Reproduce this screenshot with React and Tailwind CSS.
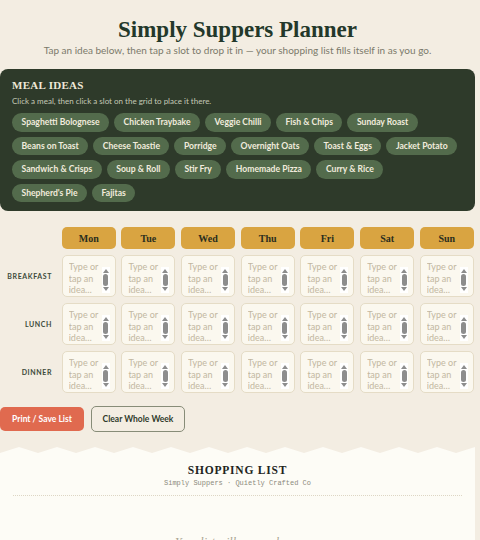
import React from 'react';

const meals = [
  'Spaghetti Bolognese', 'Chicken Traybake', 'Veggie Chilli', 'Fish & Chips', 'Sunday Roast',
  'Beans on Toast', 'Cheese Toastie', 'Porridge', 'Overnight Oats', 'Toast & Eggs', 'Jacket Potato',
  'Sandwich & Crisps', 'Soup & Roll', 'Stir Fry', 'Homemade Pizza', 'Curry & Rice',
  "Shepherd's Pie", 'Fajitas',
];
const days = ['Mon', 'Tue', 'Wed', 'Thu', 'Fri', 'Sat', 'Sun'];
const slots = ['Breakfast', 'Lunch', 'Dinner'];

const sans = { fontFamily: 'Lato, "Open Sans", sans-serif' };

const Zigzag = () => {
  const pts = [];
  for (let x = 0; x <= 475; x += 38) {
    pts.push(`${x},6`, `${x + 19},0`);
  }
  pts.push('475,6', '475,8', '0,8');
  return (
    <svg width="475" height="8" viewBox="0 0 475 8" className="block">
      <polygon points={pts.join(' ')} fill="#fdfcf6" />
    </svg>
  );
};

// the little classic scrollbar each slot shows
const Scrollbar = () => (
  <div className="mt-[6px] w-[8px] h-[26px] bg-white flex flex-col items-center justify-between py-[2px] shrink-0">
    <div className="w-0 h-0 border-x-[3px] border-x-transparent border-b-[4px] border-b-[#8d8d8d]" />
    <div className="w-[5px] h-[12px] rounded-full bg-[#8d8d8d]" />
    <div className="w-0 h-0 border-x-[3px] border-x-transparent border-t-[4px] border-t-[#8d8d8d]" />
  </div>
);

export default function App() {
  return (
    <div className="min-h-screen bg-[#f3ede2] overflow-hidden" style={sans}>
      <div className="w-[475px]">
        <header className="pt-[16px] text-center">
          <h1 className="font-['Liberation_Serif',serif] font-bold text-[23px] leading-[27px] text-[#23382a]">
            Simply Suppers Planner
          </h1>
          <p className="text-[10px] leading-[14px] text-[#7b7a6b]">
            Tap an idea below, then tap a slot to drop it in — your shopping list fills itself in as you go.
          </p>
        </header>

        <section className="mt-[12px] bg-[#2e3a2a] rounded-[8px] px-[12px] pt-[9px] pb-[9px]">
          <h2 className="font-['Liberation_Serif',serif] font-bold text-[11px] leading-[14px] text-[#efe8d8] tracking-[0.3px]">
            MEAL IDEAS
          </h2>
          <p className="text-[8px] leading-[12px] text-[#c4c9b6] mt-[3px]">
            Click a meal, then click a slot on the grid to place it there.
          </p>
          <div className="w-[449px] flex flex-wrap gap-x-[5px] gap-y-[5px] mt-[6px]">
            {meals.map((m) => (
              <button
                key={m}
                className="h-[18.5px] px-[9.5px] rounded-full bg-[#536b4c] text-[#f1ebdd] text-[8.6px] font-bold leading-[18px]"
              >
                {m}
              </button>
            ))}
          </div>
        </section>

        <div className="mt-[16px] grid grid-cols-[56px_repeat(7,54px)] gap-x-[5.7px] gap-y-[6px]">
          <div />
          {days.map((d) => (
            <div
              key={d}
              className="h-[22px] rounded-[5px] bg-[#d9a441] flex items-center justify-center font-['Liberation_Serif',serif] font-bold text-[10px] text-[#2b2e1e]"
            >
              {d}
            </div>
          ))}
          {slots.map((s) => (
            <React.Fragment key={s}>
              <div className="h-[42px] flex items-center justify-end pr-[4px] text-[7px] font-bold uppercase tracking-[0.6px] text-[#3c4a3a]">
                {s}
              </div>
              {days.map((d) => (
                <div
                  key={d}
                  className="h-[42px] rounded-[5px] border border-[#e5dcc6] bg-[#fbf8ef] pl-[6px] pr-[5px] pt-[5px] flex"
                >
                  <textarea
                    placeholder="Type or tap an idea…"
                    className="w-[33px] h-[35px] p-0 resize-none bg-transparent outline-none overflow-hidden text-[9px] leading-[11.5px] placeholder:text-[#c2b7a0] text-[#3c4a3a]"
                    style={sans}
                  />
                  <Scrollbar />
                </div>
              ))}
            </React.Fragment>
          ))}
        </div>

        <div className="mt-[14px] flex gap-[7px]">
          <button className="h-[24px] w-[84px] rounded-[5px] bg-[#e06a4f] text-white text-[8.5px] font-bold">
            Print / Save List
          </button>
          <button className="h-[26px] -mt-[1px] w-[94px] rounded-[5px] border-[1.5px] border-[#878c78] text-[#2f3a2a] text-[8.5px] font-bold">
            Clear Whole Week
          </button>
        </div>

        <div className="mt-[15px]">
          <Zigzag />
          <div className="bg-[#fdfcf6] px-[13px] pt-[8px] pb-[20px] text-center">
            <h3 className="font-['Liberation_Serif',serif] font-bold text-[11.5px] leading-[14px] tracking-[0.8px] text-[#22241c]">
              SHOPPING LIST
            </h3>
            <p className="font-['Liberation_Mono',monospace] text-[7px] leading-[10px] text-[#8c8a7c] mt-[1px]">
              Simply Suppers · Quietly Crafted Co
            </p>
            <div className="mt-[7px] border-t-[1.5px] border-dotted border-[#ddd6c4]" />
            <p className="mt-[37px] font-['Liberation_Serif',serif] italic text-[12px] text-[#a9a390]">
              Your list will appear here.
            </p>
          </div>
        </div>
      </div>
    </div>
  );
}
